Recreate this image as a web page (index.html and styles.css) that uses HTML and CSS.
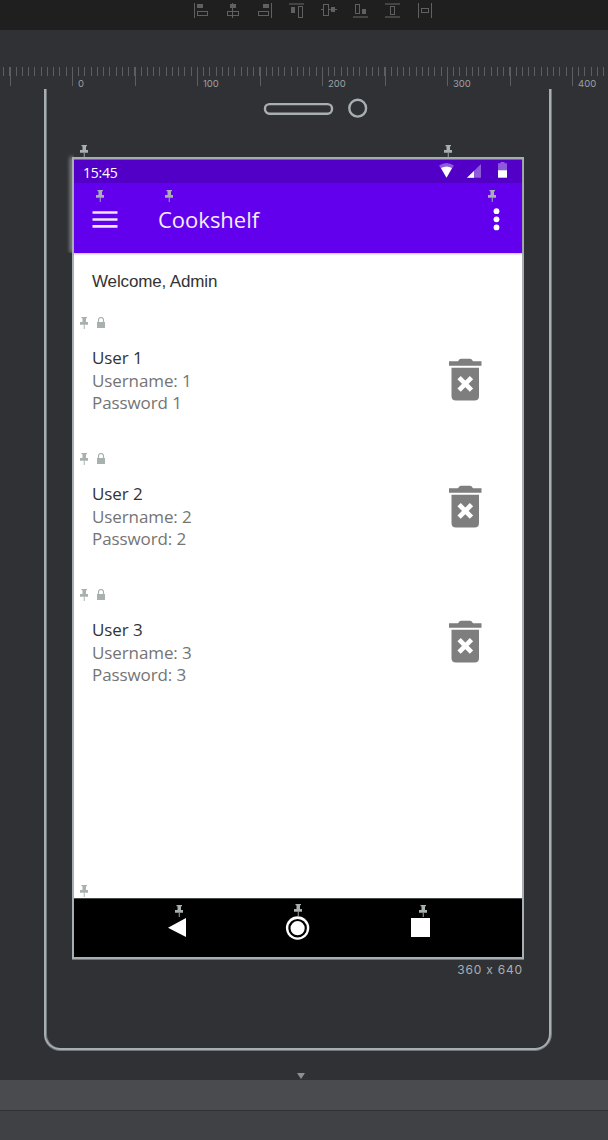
FILE: index.html
```html
<!DOCTYPE html>
<html lang="en">
<head>
<meta charset="utf-8">
<title>Cookshelf</title>
<link rel="stylesheet" href="styles.css">
</head>
<body>
<svg class="defs" aria-hidden="true">
  <symbol id="pin" viewBox="0 0 8 12"><path d="M1.5 0h5.5v1.2h-1V5h2v2.7H0V5h2.5V1.2h-1z"/><path d="M3.7 7.7h1.2V12H3.7z" opacity=".8"/></symbol>
  <symbol id="lock" viewBox="0 0 9 12"><path d="M0 5h8v6H0z"/><path d="M1.500 5V3a2.500 2.500 0 0 1 5 0v2" fill="none" stroke="currentColor" stroke-width="1.200"/></symbol>
  <symbol id="trash" viewBox="0 0 34 43"><path d="M0 3.200h9L10.500 1.300Q11 .700 12 .700h9q1 0 1.500.6l1.500 1.900h8.500v4.600H0z"/><path d="M2.500 9.800H30v28.200q0 4.500-4.500 4.500H7Q2.500 42.500 2.500 38z"/><path d="m10.100 19.700 12.400 12.400m0-12.400-12.400 12.400" stroke="#fff" stroke-width="4.700"/></symbol>
</svg>

<header class="toolbar">
  <svg width="242" height="18" viewBox="192 2 242 18" shape-rendering="crispEdges">
    <g class="solid">
      <path d="M194 3h1v15h-1zM197 4h6v4h-6zM230 4h6v4h-6zM232 2.500h1v15h-1zM263 4h6v4h-6zM271 3h1v15h-1zM291 7h4v6h-4zM331 7h4v5h-4zM321 9h2v1h-2zM328 9h9v1h-9zM362 9h4v5h-4zM418 3h1v15h-1zM431 3h1v15h-1z"/>
      <path class="dim" d="M289 3h15v2h-15zM353 16h15v2h-15zM385 3h15v2h-15zM385 16h15v2h-15z"/>
    </g>
    <g class="line">
      <path d="M197.500 11.500h10v4h-10zM227.500 11.500h11v4h-11zM258.500 11.500h10v4h-10zM355.500 4.500h4v9h-4zM421.500 8.500h7v4h-7z"/>
      <path d="M298.500 6.500h4v11h-4zM323.500 4.500h5v11h-5zM390.500 6.500h4v8h-4z"/>
    </g>
  </svg>
</header>

<main class="canvas">
  <div class="ruler">
    <svg class="ticks" width="608" height="19" shape-rendering="crispEdges">
      <path class="minor" d="M3.200 4.500H608"/>
      <path class="major" d="M9.700 9.500H608"/>
    </svg>
    <div class="marks"><span>0</span><span>100</span><span>200</span><span>300</span><span>400</span></div>
  </div>

  <section class="device">
    <div class="speaker">
      <svg width="106" height="22" viewBox="0 0 106 22"><rect x="2" y="6.100" width="67" height="9.600" rx="4.500"/><circle cx="94.700" cy="10.200" r="8.400"/></svg>
    </div>
    <div class="screen">
      <div class="top">
        <div class="status">
          <span>15:45</span>
          <svg width="70" height="18" viewBox="438 161 70 18" fill="#fff">
            <path d="M439 165.600q7.500-5 15 0L446.500 177.500z" opacity=".35"/><path d="M441 168q5.500-3 11 0l-5.500 9.700z"/>
            <path d="M481 164v13.700h-14z" opacity=".35"/><path d="M474 171v6.700h-7z"/>
            <path d="M500.500 162h4v1.200h2.500v7h-9v-7h2.500z" opacity=".35"/><path d="M498 170.200h9v7.500h-9z"/>
          </svg>
        </div>
        <div class="appbar">
          <svg width="26" height="18" viewBox="0 0 26 18"><path d="M.5 2.500h25M.5 9.500h25M.5 16.400h25" stroke="#fff" stroke-opacity=".9" stroke-width="2.600"/></svg>
          <h1>Cookshelf</h1>
          <svg class="more" width="7" height="24" viewBox="0 0 7 24" fill="#fff"><circle cx="3.500" cy="4.200" r="2.900"/><circle cx="3.500" cy="12.300" r="2.900"/><circle cx="3.500" cy="20.400" r="2.900"/></svg>
        </div>
      </div>
      <div class="content">
        <p class="welcome">Welcome, Admin</p>
        <article class="user first">
          <div class="info"><div class="flags"><svg class="pin"><use href="#pin"/></svg><svg class="lock"><use href="#lock"/></svg></div>
            <h2>User 1</h2><p>Username: 1</p><p>Password 1</p></div>
          <svg class="trash"><use href="#trash"/></svg>
        </article>
        <article class="user">
          <div class="info"><div class="flags"><svg class="pin"><use href="#pin"/></svg><svg class="lock"><use href="#lock"/></svg></div>
            <h2>User 2</h2><p>Username: 2</p><p>Password: 2</p></div>
          <svg class="trash"><use href="#trash"/></svg>
        </article>
        <article class="user last">
          <div class="info"><div class="flags"><svg class="pin"><use href="#pin"/></svg><svg class="lock"><use href="#lock"/></svg></div>
            <h2>User 3</h2><p>Username: 3</p><p>Password: 3</p></div>
          <svg class="trash"><use href="#trash"/></svg>
        </article>
      </div>
      <nav class="nav">
        <svg width="264" height="24" viewBox="168 916 264 24" fill="#fff">
          <path d="M168 927.700 186 918v19z"/>
          <circle cx="297.600" cy="928" r="11.700"/><circle cx="297.600" cy="928.200" r="8.200" fill="none" stroke="#000" stroke-width="2.200"/>
          <path d="M411 918h19v19h-19z"/>
        </svg>
      </nav>
    </div>
    <div class="size">360 x 640</div>
  </section>

  <svg class="pin mark time"><use href="#pin"/></svg>
  <svg class="pin mark icons"><use href="#pin"/></svg>
  <svg class="pin mark menu"><use href="#pin"/></svg>
  <svg class="pin mark title"><use href="#pin"/></svg>
  <svg class="pin mark dots"><use href="#pin"/></svg>
  <svg class="pin mark navbar"><use href="#pin"/></svg>
  <svg class="pin mark back"><use href="#pin"/></svg>
  <svg class="pin mark home"><use href="#pin"/></svg>
  <svg class="pin mark recent"><use href="#pin"/></svg>
  <svg class="drawer" width="8" height="6"><path d="M0 0h8L4 6z"/></svg>
</main>
<div class="panel"></div>
<footer class="footer"></footer>
</body>
</html>
```

FILE: styles.css
```css
* { box-sizing: border-box; margin: 0; padding: 0; }
body { width: 608px; height: 1140px; display: flex; flex-direction: column; overflow: hidden; background: #303135; font-family: "Open Sans", "Noto Sans", sans-serif; }
svg { display: block; flex: none; }
.defs { position: absolute; width: 0; height: 0; }
.toolbar { height: 30px; padding: 2px 0 0 192px; background: #1f1f1f; }
.solid { fill: #606060; }
.dim { fill: #444; }
.line { fill: none; stroke: #606060; }
.canvas { position: relative; height: 1050px; }
.ruler { height: 59px; padding-top: 37px; }
.ticks { fill: none; stroke: #5c5e61; }
.minor { stroke-width: 9; stroke-dasharray: 1 5.25; }
.major { stroke-width: 19; stroke-dasharray: 1 61.5; }
.marks { display: grid; grid-template-columns: repeat(4, 125px) 30px; height: 14px; margin: -9px 0 0 78px; color: #9da0a3; font: 9.5px/13px Inter, sans-serif; }
.device { width: 507px; height: 961px; margin-left: 44px; border: 2px solid #a8afb2; border-top: 0; border-radius: 0 0 16px 16px; box-shadow: inset 1px 0 #71777a, 1px 0 #71777a, 0 1px #71777a; }
.speaker { height: 68px; padding: 9px 0 0 217px; }
.speaker svg { fill: none; stroke: #a8afb2; stroke-width: 2.4; }
.screen { width: 452px; height: 802px; margin-left: 26px; border: 2px solid #a8afb2; display: flex; flex-direction: column; background: #fff; box-shadow: 0 1px #71777a; }
.top { position: relative; z-index: 1; height: 94px; box-shadow: 0 1px 2px #0004; }
/* Light spill around the top-left corner of the artboard */
.top::before { content: ""; position: absolute; z-index: -1; inset: -2px auto 0 -2px; width: 2px; background: #a8afb2; box-shadow: -1px 0 4px #eee; clip-path: inset(-4px 0 0 -8px); }
.status { height: 24px; display: flex; justify-content: space-between; padding: 1px 14px 0 9px; background: #5200c8; border-top: 1px solid #7b5ab5; color: #fff; font-size: 14px; line-height: 23px; letter-spacing: -.25px; }
.appbar { height: 70px; display: flex; align-items: flex-start; background: #6200ee; padding: 27px 22px 0 18px; color: #f4edff; }
.appbar h1 { margin: -6px 0 0 40px; font-weight: 400; font-size: 22px; line-height: 30px; }
.more { margin: -3px 0 0 auto; }
.content { height: 645px; }
.welcome { height: 63px; padding: 19px 0 0 18px; color: #333; font: 17px/20px "Liberation Sans", Arial, sans-serif; letter-spacing: -.14px; }
.user { height: 136px; display: flex; justify-content: space-between; padding-right: 39px; color: #747474; }
.info { padding-left: 18px; font-size: 17px; line-height: 22.5px; letter-spacing: -.1px; }
.info h2 { font-size: 17px; font-weight: 400; color: #333; }
.flags { display: flex; gap: 9px; height: 31px; margin-left: -12px; padding-top: 1px; }
.pin { width: 8px; height: 12px; fill: #a8b0b0; }
.lock { width: 9px; height: 12px; fill: #a8b0b0; color: #a8b0b0; }
.trash { width: 34px; height: 43px; margin-top: 33px; fill: #7e7e7e; }
.first .trash { margin-top: 42px; }
.last .trash { margin-top: 32px; }
.nav { height: 59px; padding: 17px 0 0 94px; background: #000; border-top: 1px solid #444a49; }
.size { margin: 3px 26px 0 0; text-align: right; color: #a8afb2; font: 12px/16px Inter, sans-serif; letter-spacing: .8px; }
.mark { position: absolute; z-index: 2; }
.time { left: 80px; top: 115px; }
.icons { left: 444px; top: 115px; }
.menu { left: 96px; top: 160px; }
.title { left: 165px; top: 160px; }
.dots { left: 488px; top: 160px; }
.navbar { left: 80px; top: 855px; }
.back { left: 175px; top: 875px; }
.home { left: 294px; top: 874px; }
.recent { left: 419px; top: 875px; }
.drawer { position: absolute; left: 297px; top: 1043px; fill: #8b9092; }
.panel { height: 31px; background: #4a4b4f; border-bottom: 1px solid #303135; }
.footer { height: 29px; background: #404145; }
```
